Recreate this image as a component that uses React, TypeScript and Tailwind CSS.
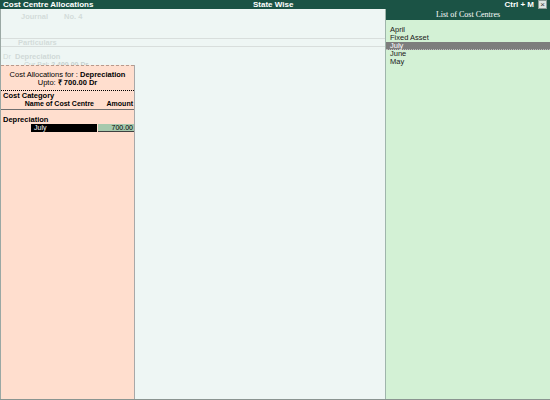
const centres = ["April", "Fixed Asset", "July", "June", "May"];

const CostCentreList = () => (
    <div className="w-[165px] flex flex-col border-l border-[#9fb5ab] bg-[#d3f1d5]">
        <div className="h-[11px] bg-[#1b5345] text-white text-center text-[8px] leading-[11px] font-['Liberation_Serif',serif]">
            List of Cost Centres
        </div>
        <div className="pt-[6px] flex flex-col">
            {centres.map((name) => (
                <div
                    key={name}
                    className={
                        name === "July"
                            ? "h-[8px] leading-[8px] pl-[4px] text-[7.5px] text-white bg-[#7d7d7d] border-b border-dotted border-[#b8b8b8]"
                            : "h-[8px] leading-[8px] pl-[4px] text-[7.5px] text-[#202020]"
                    }
                >
                    {name}
                </div>
            ))}
        </div>
    </div>
);

const AllocationPanel = () => (
    <div className="absolute left-0 top-[56px] bottom-0 w-[134px] bg-[#ffdece] border-r border-[#a8a8a8] text-black">
        <div className="border-t border-dashed border-[#b89a8c]" />
        <div className="pt-[5px] text-center text-[7.5px] leading-[8px]">
            <div>
                Cost Allocations for : <span className="font-bold">Depreciation</span>
            </div>
            <div>
                Upto: <span className="font-bold">₹ 700.00 Dr</span>
            </div>
        </div>
        <div className="mt-[3px] border-t border-dotted border-black pt-[1px]">
            <div className="pl-[2px] text-[7.5px] leading-[8px] font-bold">Cost Category</div>
            <div className="flex text-[7px] leading-[8px] font-bold border-b border-[#707070] pb-[1px]">
                <span className="w-[96px] text-right pr-[3px]">Name of Cost Centre</span>
                <span className="flex-1 text-right pr-[1px]">Amount</span>
            </div>
        </div>
        <div className="mt-[6px] pl-[2px] text-[7.5px] leading-[8px] font-bold">Depreciation</div>
        <div className="flex h-[8px] text-[7px] leading-[8px]">
            <div className="ml-[30px] w-[66px] bg-black text-white pl-[3px]">July</div>
            <div className="flex-1 ml-[1px] bg-[#a6c9ad] text-right pr-[1px] border-b border-[#404040]">700.00</div>
        </div>
    </div>
);

export default function App() {
    return (
        <div className="w-[550px] h-[400px] flex flex-col bg-[#eef6f4] font-['Liberation_Sans',Arial,sans-serif] overflow-hidden">
            <div className="h-[9px] flex items-center bg-[#1b5345] text-white text-[8px] font-bold leading-[9px] px-[3px]">
                <span className="w-[250px]">Cost Centre Allocations</span>
                <span className="flex-1">State Wise</span>
                <span className="mr-[4px]">Ctrl + M</span>
                <span className="w-[9px] h-[9px] border border-[#8a9a94] bg-[#dde5e2] text-[#3a3a3a] text-[8px] leading-[7px] text-center font-normal">
                    ×
                </span>
            </div>
            <div className="flex-1 flex border-b border-[#8a9490]">
                <div className="relative flex-1 border-l border-[#9aa8a4]">
                    <div className="flex pt-[4px] text-[7.5px] font-bold text-[#d3dcda] leading-[8px]">
                        <span className="ml-[20px] w-[43px]">Journal</span>
                        <span>No. 4</span>
                    </div>
                    <div className="mt-[17px] border-t border-b border-[#d8dedc] h-[9px] text-[7.5px] font-bold text-[#d3dcda] leading-[7px] pl-[17px]">
                        Particulars
                    </div>
                    <div className="mt-[6px] flex text-[7.5px] leading-[8px] text-[#d0d9d7]">
                        <span className="ml-[2px] w-[12px] font-normal">Dr</span>
                        <span className="font-bold">Depreciation</span>
                    </div>
                    <div className="pl-[23px] text-[7px] leading-[8px] text-[#c8d2d0]">
                        Cur Bal: <span className="font-bold">2,400.00 Dr</span>
                    </div>
                    <AllocationPanel />
                </div>
                <CostCentreList />
            </div>
        </div>
    );
}
